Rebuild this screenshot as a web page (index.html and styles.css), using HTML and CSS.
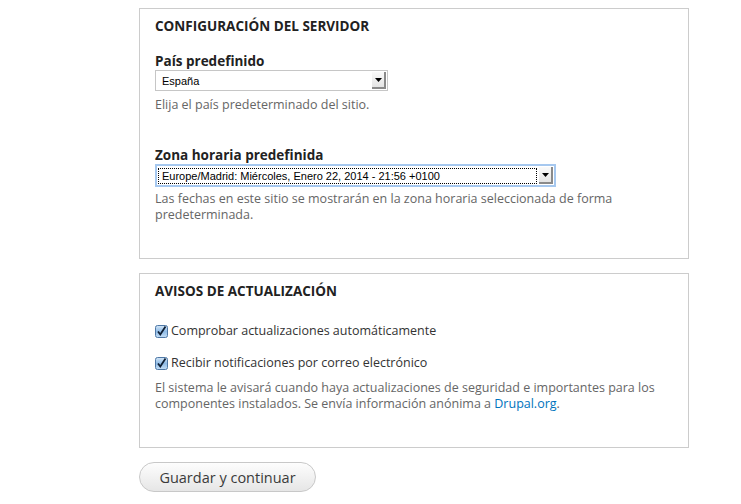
FILE: index.html
```html
<!DOCTYPE html>
<html lang="es">
<head>
    <meta charset="UTF-8">
    <title>Configurar sitio</title>
    <link rel="stylesheet" href="styles.css">
</head>
<body>
    <form class="install-form">
        <fieldset class="group">
            <h2 class="group-title">Configuración del servidor</h2>

            <div class="form-item">
                <label class="form-label">País predefinido</label>
                <div class="select select-country">
                    <span class="select-value">España</span>
                    <span class="select-arrow"><svg width="7" height="4" viewBox="0 0 7 4"><path d="M0 0h7L3.5 4z" fill="#000"/></svg></span>
                </div>
                <div class="description">Elija el país predeterminado del sitio.</div>
            </div>

            <div class="form-item form-item-tz">
                <label class="form-label">Zona horaria predefinida</label>
                <div class="select select-tz focused">
                    <span class="select-value">Europe/Madrid: Miércoles, Enero 22, 2014 - 21:56 +0100</span>
                    <span class="select-arrow"><svg width="7" height="4" viewBox="0 0 7 4"><path d="M0 0h7L3.5 4z" fill="#000"/></svg></span>
                </div>
                <div class="description">Las fechas en este sitio se mostrarán en la zona horaria seleccionada de forma predeterminada.</div>
            </div>
        </fieldset>

        <fieldset class="group group-updates">
            <h2 class="group-title">Avisos de actualización</h2>

            <label class="checkbox first">
                <svg class="check" width="13" height="13" viewBox="0 0 13 13">
                    <defs>
                        <linearGradient id="cb" x1="0" y1="0" x2="0" y2="1">
                            <stop offset="0" stop-color="#d6e8f8"/>
                            <stop offset="0.5" stop-color="#8fbbe6"/>
                            <stop offset="1" stop-color="#c4def6"/>
                        </linearGradient>
                    </defs>
                    <rect x="0.5" y="0.5" width="12" height="12" rx="2" fill="url(#cb)" stroke="#4f78a6"/>
                    <path d="M3 6.5l2.3 3L10.5 1.5" fill="none" stroke="#0e1e33" stroke-width="1.8"/>
                </svg>
                Comprobar actualizaciones automáticamente
            </label>
            <label class="checkbox">
                <svg class="check" width="13" height="13" viewBox="0 0 13 13">
                    <rect x="0.5" y="0.5" width="12" height="12" rx="2" fill="url(#cb)" stroke="#4f78a6"/>
                    <path d="M3 6.5l2.3 3L10.5 1.5" fill="none" stroke="#0e1e33" stroke-width="1.8"/>
                </svg>
                Recibir notificaciones por correo electrónico
            </label>
            <div class="description">El sistema le avisará cuando haya actualizaciones de seguridad e importantes para los componentes instalados. Se envía información anónima a <a href="#">Drupal.org</a>.</div>
        </fieldset>

        <button type="button" class="button">Guardar y continuar</button>
    </form>
</body>
</html>
```

FILE: styles.css
```css
body {
    margin: 0;
    background: #fff;
    font-family: "Open Sans", "DejaVu Sans", sans-serif;
    font-size: 13px;
    color: #333;
}

.install-form {
    width: 550px;
    margin-left: 139px;
    padding-top: 8px;
}

.group {
    margin: 0;
    border: 1px solid #ccc;
    padding: 8px 15px 0;
    height: 251px;
    box-sizing: border-box;
}

.group-updates {
    margin-top: 14px;
    height: 175px;
}

.group-title {
    margin: 0;
    font-size: 13.5px;
    font-weight: bold;
    text-transform: uppercase;
    color: #222;
    line-height: 18px;
}

.form-item {
    margin-top: 18px;
}

.form-item-tz {
    margin-top: 34px;
}

.form-label {
    display: block;
    font-weight: bold;
    font-size: 13.5px;
    color: #222;
    line-height: 16px;
}

.select {
    display: flex;
    align-items: center;
    box-sizing: border-box;
    height: 21px;
    margin-top: 1px;
    border: 1px solid #c6c6c6;
    background: #fff;
    font-family: "Liberation Sans", Arial, sans-serif;
    font-size: 11px;
    color: #000;
}

.select-country {
    width: 233px;
}

.select-tz {
    width: 401px;
}

.select-value {
    flex: 1;
    padding-left: 6px;
}

.focused {
    border: 2px solid #a6c8ef;
    height: 23px;
    margin-top: 1px;
}

.focused .select-value {
    margin: 1px 0 1px 1px;
    padding: 1px 0 1px 3px;
    border: 1px dotted #000;
}

.select-arrow {
    width: 14px;
    height: 17px;
    margin: 0 1px 0 2px;
    display: flex;
    align-items: center;
    justify-content: center;
    background: linear-gradient(#fafafa, #e4e4e4);
    border-right: 2px solid #8a8a8a;
    border-bottom: 2px solid #8a8a8a;
    box-sizing: border-box;
}

.description {
    margin-top: 6px;
    color: #666;
    font-size: 12.5px;
    line-height: 16px;
}

.form-item-tz .description {
    margin-top: 4px;
}

.checkbox {
    display: flex;
    align-items: center;
    gap: 3px;
    margin-top: 16px;
    color: #333;
    font-size: 12.5px;
    line-height: 16px;
}

.checkbox.first {
    margin-top: 23px;
}

.group-updates .description {
    margin-top: 9px;
}

a {
    color: #0074bd;
    text-decoration: none;
}

.button {
    display: block;
    margin-top: 14px;
    width: 177px;
    height: 30px;
    border: 1px solid #c8c8c8;
    border-radius: 16px;
    background: linear-gradient(#fdfdfd, #e6e6e6);
    font-family: "Open Sans", "DejaVu Sans", sans-serif;
    font-size: 14.5px;
    color: #3a3a3a;
    cursor: pointer;
}
```
